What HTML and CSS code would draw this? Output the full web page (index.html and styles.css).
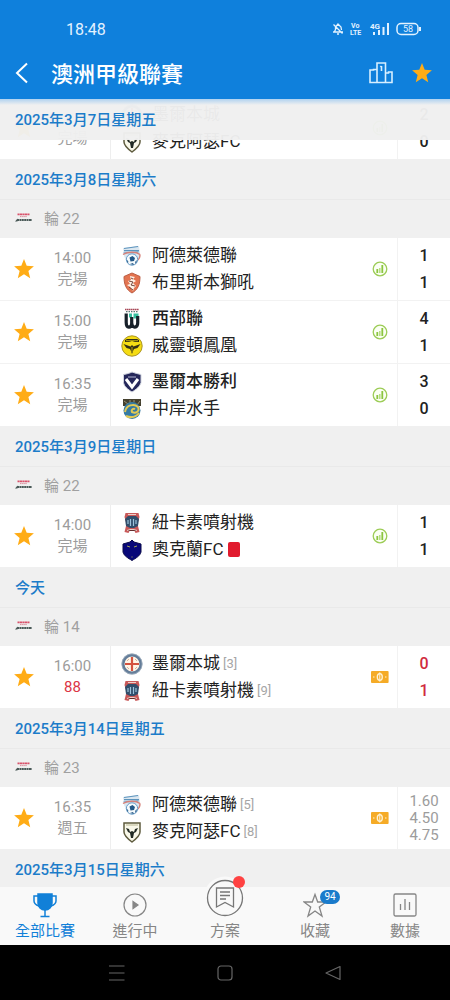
FILE: index.html
```html
<!DOCTYPE html>
<html lang="zh-Hant">
<head>
  <meta charset="UTF-8">
  <meta name="viewport" content="width=device-width, initial-scale=1">
  <title>澳洲甲級聯賽</title>
  <link rel="stylesheet" href="styles.css">
</head>
<body>
  <!-- Shared icons -->
  <svg class="sprite" aria-hidden="true">
    <symbol id="star" viewBox="0 0 22 22">
      <path fill="#ffac16" d="M11 1l2.7 6.8 7.2.5-5.5 4.7 1.8 7.2-6.2-3.9-6.2 3.9 1.8-7.2L1.100 8.300l7.200-.5z"/>
    </symbol>
    <symbol id="stats" viewBox="0 0 16 16">
      <circle cx="8" cy="8" r="6.800" fill="#fbfff4" stroke="#9ccc56" stroke-width="1.300"/>
      <path stroke="#8bc53f" stroke-width="1.800" d="M5.300 8v4M10.300 4v8"/>
      <path stroke="#b5dc80" stroke-width="1.500" d="M7.800 7v5"/>
    </symbol>
    <symbol id="cash" viewBox="0 0 18 12">
      <rect width="17.600" height="12" rx="1" fill="#f5ab27"/>
      <ellipse cx="8.800" cy="6" rx="2.500" ry="3.300" fill="none" stroke="#fff3d6" stroke-width="1.300"/>
      <path stroke="#fff3d6" d="M8.800 1.300v9.400M2 6h1.500M14 6h1.500"/>
    </symbol>
    <symbol id="league" viewBox="0 0 17 10">
      <path stroke="#d9526b" stroke-width="1.800" d="M2.500 1.300h12" stroke-dasharray="2.200 .3"/>
      <path stroke="#d88b99" d="M5 3.600h7" stroke-dasharray="1.500 .6"/>
      <path stroke="#4a5a58" stroke-width="2" d="M2 7h15" stroke-dasharray="2 .4"/>
      <path fill="#4a5a58" d="M0 8.500L2.500 5.500v3z"/>
    </symbol>

    <!-- Team crests -->
    <symbol id="adelaide" viewBox="0 0 22 22">
      <path fill="#dbe7f0" d="M2 3l16-2 1 8-2 7-6 5-5-4-3-6z"/>
      <path fill="none" stroke="#5d94bd" stroke-width="1.200" d="M3 3.500l14-2M3 5.600h15M2.500 8l15-1"/>
      <path fill="none" stroke="#d68078" stroke-width="1.400" d="M2 9.500c5-3 13-3 17 0M19 9.500c0 3-1 5-3 6"/>
      <circle cx="11" cy="14.500" r="5.700" fill="#f5fafc" stroke="#679cc8"/>
      <path fill="#245887" d="M8.500 12.500l3-1.500 2.500 2-1 3-3.500.5zM5.500 14l2 3-1 1zM14 17l2-2-1 4zM9 19l3-1 1 2z"/>
    </symbol>
    <symbol id="brisbane" viewBox="0 0 22 22">
      <path fill="#e37450" stroke="#bd5e43" d="M3 4.500L11 1l8 3.500c0 8-2 13-8 16.500C5 17.500 3 12.500 3 4.500z"/>
      <path fill="#fff3e8" d="M9 4l5 1-2 2 3 2-3 2 3 3-2 2-1 3-3-4-3-2 3-1-2-3 3-1z"/>
      <path fill="none" stroke="#71453b" d="M8 9l4 1-2 3 4 1M10 6l2 1M8 15l4 3"/>
    </symbol>
    <symbol id="western" viewBox="0 0 22 22">
      <path stroke="#a84858" stroke-width="1.500" d="M4 1.500h14" stroke-dasharray="1.600 .4"/>
      <path stroke="#31564f" d="M5 3.700h12" stroke-dasharray="1.500 1"/>
      <path fill="#36bd9e" d="M12.500 5.500h5v5h-5zM8 5.500h3v4H8z"/>
      <path fill="none" stroke="#172029" stroke-width="3.200" d="M5.200 5.500v9c0 6 5 6 5.500 1V9v6c.5 6 6 5 6 0V8"/>
    </symbol>
    <symbol id="wellington" viewBox="0 0 22 22">
      <circle cx="11" cy="11" r="10.200" fill="#f5dc13" stroke="#ab9520"/>
      <path fill="#332f16" d="M4 5l2-1h10l2 1v2h-4l-3-1-3 1H4zM2.500 9l7 2.500L11 10l1.500 1.500 7-2.500-3 4-3.500 1-1 2-1 3-1-3-1-2-3.500-1z"/>
      <path stroke="#f5dc13" stroke-width=".7" d="M5 5.700h12M11 12v5"/>
    </symbol>
    <symbol id="victory" viewBox="0 0 22 22">
      <path fill="#25275a" stroke="#d0d4df" d="M2.500 3.500C6 3 9 2 11 1c3 1 6 2 9 2.500v8c-1 4-5 7-9 9.500-4-2.500-8-5.500-8.500-9.500z"/>
      <path fill="none" stroke="#fff" stroke-width="3" d="M5 8l6 8 6-8"/>
      <path stroke="#b5b8d4" d="M7 6h8"/>
    </symbol>
    <symbol id="mariners" viewBox="0 0 22 22">
      <path fill="#45412f" d="M2 1h18v7H2z"/>
      <path stroke="#b3aa87" stroke-width=".8" d="M3 3l4 3M9 2v3M13 2v2M19 3l-3 4"/>
      <circle cx="11" cy="12.500" r="8.500" fill="#367ba3"/>
      <path fill="none" stroke="#e2c953" stroke-width="2" d="M4 14c1-7 9-9 13-5 2 4-2 7-6 5-1-2 1-4 3-3M5 18c5 2 10 1 13-3"/>
    </symbol>
    <symbol id="newcastle" viewBox="0 0 22 22">
      <path fill="#c85959" d="M4.500 1h13l1 4-2 7 2 8-4 1-1-2h-5l-1 2-4-1 2-8-2-7z"/>
      <path fill="#314e6b" d="M4 7l3-3h8l3 3-1 7-4 2H9l-4-2z"/>
      <path fill="none" stroke="#9cc3db" stroke-width="1.200" d="M7 12V8M9.500 14V7M12.500 14V7M15 12V8"/>
      <path stroke="#efd0c9" d="M7 2.500h8M6 18.500l3-1h4l3 1"/>
    </symbol>
    <symbol id="auckland" viewBox="0 0 22 22">
      <path fill="#080879" stroke="#0a0a4b" d="M2 5l7-2 2-2 2 2 7 2v8c-1 4-5 6-9 8.500C7 19 3 17 2 13z"/>
      <path stroke="#a5a655" d="M6 7l3 1M13 8l3-1M10.500 18h1"/>
    </symbol>
    <symbol id="city" viewBox="0 0 22 22">
      <circle cx="11" cy="11" r="9" fill="#fff5e7" stroke="#647d99" stroke-width="3"/>
      <circle cx="11" cy="11" r="10.200" fill="none" stroke="#b8c4cf" stroke-width=".6"/>
      <path stroke="#d4523f" stroke-width="2.200" d="M11 4v14M4 11h14"/>
      <path fill="none" stroke="#c9a28c" stroke-width=".8" d="M6 8l2-2M14 6l2 2M6 14l2 2M14 16l2-2"/>
    </symbol>
    <symbol id="macarthur" viewBox="0 0 22 22">
      <path fill="#f9f8e9" stroke="#5e5b3e" stroke-width="1.500" d="M3 2h16v9c0 4-4 7-8 10-4-3-8-6-8-10z"/>
      <path stroke="#aaa67f" stroke-width=".8" d="M5 4h12"/>
      <path fill="#202923" d="M5 7l3 1 1 3 2-1 2 1 1-3 3-1-2 4-2 1-1 5h-2l-1-5-2-1z"/>
    </symbol>
  </svg>

  <header class="header">
    <div class="status">
      <span class="clock">18:48</span>
      <svg width="90" height="14" viewBox="0 0 90 14" fill="none" stroke="#e3f2ff">
        <path stroke-width="1.300" d="M1 10h10M2.500 9.500l1-2V5L6 2l3 3 .5 3M5 12h2M1.500 2.500l9 9"/>
        <text class="net-label" x="19" y="6">Vo</text>
        <text class="net-label" x="18" y="13">LTE</text>
        <text class="net-label big" x="38" y="7">4G</text>
        <path stroke-width="2" d="M42 13v-3M47 13V8M51.500 13V5M56 13V1"/>
        <rect x="65" y="1.500" width="21" height="11" rx="4" stroke-width="1.500"/>
        <path stroke-width="2" d="M88 5v4"/>
        <text class="net-label charge" x="71" y="10">58</text>
      </svg>
    </div>
    <div class="title-bar">
      <button class="icon-btn" aria-label="返回">
        <svg width="14" height="22" viewBox="0 0 14 22" fill="none" stroke="#fff" stroke-width="2"><path d="M12 1.500L2 11l10 9.500"/></svg>
      </button>
      <h1>澳洲甲級聯賽</h1>
      <button class="icon-btn" aria-label="排名">
        <svg width="24" height="22" viewBox="0 0 24 22" fill="none" stroke="#d8efff" stroke-width="1.600">
          <path d="M8 20.500V1h8.500v19.500M8 7.500H4.500M4.500 6.700v1.300H1v12.500h22V10h-3.500v1h-3M12.500 4v5M11.300 5l1.200-1"/>
        </svg>
      </button>
      <button class="icon-btn" aria-label="收藏聯賽"><svg width="22" height="22"><use href="#star"/></svg></button>
    </div>
  </header>

  <main class="list">
    <section class="day pinned">
      <h2>2025年3月7日星期五</h2>
      <article class="match">
        <button class="fav" aria-label="收藏"><svg width="22" height="22"><use href="#star"/></svg></button>
        <div class="time"><span>完場</span></div>
        <div class="teams">
          <div class="team"><svg class="crest"><use href="#city"/></svg>墨爾本城</div>
          <div class="team"><svg class="crest"><use href="#macarthur"/></svg>麥克阿瑟FC</div>
        </div>
        <svg class="mark" width="16" height="16"><use href="#stats"/></svg>
        <div class="score"><span>2</span><span>0</span></div>
      </article>
    </section>

    <section class="day">
      <h2>2025年3月8日星期六</h2>
      <h3><svg width="17" height="10"><use href="#league"/></svg>輪 22</h3>
      <article class="match">
        <button class="fav" aria-label="收藏"><svg width="22" height="22"><use href="#star"/></svg></button>
        <div class="time"><span>14:00</span><span>完場</span></div>
        <div class="teams">
          <div class="team"><svg class="crest"><use href="#adelaide"/></svg>阿德萊德聯</div>
          <div class="team"><svg class="crest"><use href="#brisbane"/></svg>布里斯本獅吼</div>
        </div>
        <svg class="mark" width="16" height="16"><use href="#stats"/></svg>
        <div class="score"><span>1</span><span>1</span></div>
      </article>
      <article class="match">
        <button class="fav" aria-label="收藏"><svg width="22" height="22"><use href="#star"/></svg></button>
        <div class="time"><span>15:00</span><span>完場</span></div>
        <div class="teams">
          <div class="team winner"><svg class="crest"><use href="#western"/></svg>西部聯</div>
          <div class="team"><svg class="crest"><use href="#wellington"/></svg>威靈頓鳳凰</div>
        </div>
        <svg class="mark" width="16" height="16"><use href="#stats"/></svg>
        <div class="score"><span>4</span><span>1</span></div>
      </article>
      <article class="match">
        <button class="fav" aria-label="收藏"><svg width="22" height="22"><use href="#star"/></svg></button>
        <div class="time"><span>16:35</span><span>完場</span></div>
        <div class="teams">
          <div class="team winner"><svg class="crest"><use href="#victory"/></svg>墨爾本勝利</div>
          <div class="team"><svg class="crest"><use href="#mariners"/></svg>中岸水手</div>
        </div>
        <svg class="mark" width="16" height="16"><use href="#stats"/></svg>
        <div class="score"><span>3</span><span>0</span></div>
      </article>
    </section>

    <section class="day">
      <h2>2025年3月9日星期日</h2>
      <h3><svg width="17" height="10"><use href="#league"/></svg>輪 22</h3>
      <article class="match">
        <button class="fav" aria-label="收藏"><svg width="22" height="22"><use href="#star"/></svg></button>
        <div class="time"><span>14:00</span><span>完場</span></div>
        <div class="teams">
          <div class="team"><svg class="crest"><use href="#newcastle"/></svg>紐卡素噴射機</div>
          <div class="team"><svg class="crest"><use href="#auckland"/></svg>奧克蘭FC<i class="red-card"></i></div>
        </div>
        <svg class="mark" width="16" height="16"><use href="#stats"/></svg>
        <div class="score"><span>1</span><span>1</span></div>
      </article>
    </section>

    <section class="day">
      <h2>今天</h2>
      <h3><svg width="17" height="10"><use href="#league"/></svg>輪 14</h3>
      <article class="match live">
        <button class="fav" aria-label="收藏"><svg width="22" height="22"><use href="#star"/></svg></button>
        <div class="time"><span>16:00</span><span class="minute">88</span></div>
        <div class="teams">
          <div class="team"><svg class="crest"><use href="#city"/></svg>墨爾本城<small>[3]</small></div>
          <div class="team"><svg class="crest"><use href="#newcastle"/></svg>紐卡素噴射機<small>[9]</small></div>
        </div>
        <svg class="mark" width="18" height="12"><use href="#cash"/></svg>
        <div class="score"><span>0</span><span>1</span></div>
      </article>
    </section>

    <section class="day">
      <h2>2025年3月14日星期五</h2>
      <h3><svg width="17" height="10"><use href="#league"/></svg>輪 23</h3>
      <article class="match">
        <button class="fav" aria-label="收藏"><svg width="22" height="22"><use href="#star"/></svg></button>
        <div class="time"><span>16:35</span><span>週五</span></div>
        <div class="teams">
          <div class="team"><svg class="crest"><use href="#adelaide"/></svg>阿德萊德聯<small>[5]</small></div>
          <div class="team"><svg class="crest"><use href="#macarthur"/></svg>麥克阿瑟FC<small>[8]</small></div>
        </div>
        <svg class="mark" width="18" height="12"><use href="#cash"/></svg>
        <div class="odds"><span>1.60</span><span>4.50</span><span>4.75</span></div>
      </article>
    </section>

    <section class="day">
      <h2>2025年3月15日星期六</h2>
    </section>
  </main>

  <nav class="tabs">
    <a href="#" class="tab active">
      <svg width="24" height="26" viewBox="0 0 24 26" fill="none" stroke="currentColor" stroke-width="1.500">
        <path fill="currentColor" d="M5 2h14v9c0 4-3 7-7 7s-7-3-7-7z"/>
        <path d="M5 4H1v5c0 3 2 4 5 5M19 4h4v5c0 3-2 4-5 5M12 18v6M7.500 24.500h9"/>
      </svg>
      全部比賽
    </a>
    <a href="#" class="tab">
      <svg width="24" height="26" viewBox="0 0 24 26" fill="none" stroke="currentColor" stroke-width="1.200">
        <circle cx="12" cy="13" r="11"/><path fill="currentColor" d="M10 9.500l5 3.500-5 3.500z"/>
      </svg>
      進行中
    </a>
    <a href="#" class="tab raised">
      <svg width="44" height="44" viewBox="0 0 44 44" fill="none" stroke="#777" stroke-width="1.300">
        <circle cx="22" cy="22" r="21.500" fill="#f9f9f9" stroke="none"/>
        <circle cx="22" cy="22" r="17.500"/>
        <path d="M13.500 12h17v19l-8.500-4.500-8.500 4.500zM17 16h10M17 19.500h10M17 23h6"/>
        <circle cx="36" cy="6" r="6" fill="#ff4242" stroke="none"/>
      </svg>
      方案
    </a>
    <a href="#" class="tab">
      <svg width="24" height="26" viewBox="0 0 24 26" fill="none" stroke="currentColor" stroke-width="1.300">
        <path d="M12 2.500l2.700 7.500H23l-6.700 5 2.700 9-7-5-7 5 2.700-9L1 10h8.300z"/>
      </svg>
      <span class="badge">94</span>
      收藏
    </a>
    <a href="#" class="tab">
      <svg width="24" height="26" viewBox="0 0 24 26" fill="none" stroke="currentColor" stroke-width="1.300">
        <rect x="1" y="2" width="22" height="22" rx="1.500"/><path d="M7.500 12v6M12 7v11M16.500 10v8"/>
      </svg>
      數據
    </a>
  </nav>

  <footer class="system-bar">
    <svg width="16" height="16" viewBox="0 0 16 16"><path d="M0 1h15.500M0 8h15.500M0 15h15.500"/></svg>
    <svg width="16" height="16" viewBox="0 0 16 16"><rect x="1" y="1" width="14" height="14" rx="3"/></svg>
    <svg width="16" height="16" viewBox="0 0 16 16"><path d="M15 1.500v13L1 8z" stroke-linejoin="round"/></svg>
  </footer>
</body>
</html>
```

FILE: styles.css
```css
* {
  box-sizing: border-box;
}
body {
  margin: 0;
  height: 100vh;
  display: flex;
  flex-direction: column;
  font-family: Roboto, "Noto Sans CJK TC", sans-serif;
  font-size: 15px;
  background: #f0f0f0;
  color: #222;
}
button {
  padding: 0;
  border: none;
  background: none;
  cursor: pointer;
}
svg {
  display: block;
  flex: none;
}
.sprite {
  position: absolute;
  width: 0;
  height: 0;
}

/* Header */
.header {
  position: relative;
  z-index: 3;
  flex: none;
  background: #0f80dc;
  color: #fff;
}
.header::after {
  content: "";
  position: absolute;
  top: 100%;
  left: 0;
  right: 0;
  height: 6px;
  background: linear-gradient(#b0d2f0, rgba(240, 240, 240, 0));
}
.status {
  display: flex;
  align-items: center;
  justify-content: space-between;
  height: 48px;
  padding: 10px 28px 0 66px;
}
.clock {
  font-size: 16px;
  color: #e3f2ff;
}
.net-label {
  font-size: 7px;
  font-weight: 700;
  fill: #e3f2ff;
  stroke: none;
}
.net-label.big {
  font-size: 8px;
}
.net-label.charge {
  font-size: 9px;
  font-weight: 400;
}
.title-bar {
  display: flex;
  align-items: center;
  gap: 18px;
  height: 51px;
  padding: 0 17px 2px 15px;
}
h1 {
  flex: 1;
  margin: 0 0 0 4px;
  padding-bottom: 2px;
  font-size: 22px;
  font-weight: 500;
}

/* Match list */
.list {
  flex: 1;
  min-height: 0;
  overflow: hidden;
}
h2 {
  margin: 0;
  padding: 0 15px;
  height: 41px;
  line-height: 42px;
  border-bottom: 1px solid #e9e9e9;
  font-size: 15px;
  font-weight: 500;
  color: #1c7cc9;
  background: #f0f0f0;
}
h3 {
  display: flex;
  align-items: center;
  gap: 12px;
  margin: 0;
  padding: 0 15px 3px;
  height: 38px;
  font-size: 15px;
  font-weight: 400;
  color: #a0a0a0;
}
.pinned h2 {
  position: relative;
  z-index: 2;
  border-bottom: none;
  background: rgba(240, 240, 240, 0.97);
}
/* the scrolled row runs under the pinned date */
.pinned .match {
  margin-top: -43px;
}
.pinned .time {
  align-self: end;
  padding-bottom: 10px;
}
.match {
  display: grid;
  grid-template-columns: 35px 75px 1fr 34px 53px;
  align-items: center;
  height: 62px;
  background: #fff;
}
.match + .match {
  height: 63px;
  border-top: 1px solid #f2f2f2;
}
.fav {
  padding-left: 13px;
}
.time, .score, .odds {
  display: flex;
  flex-direction: column;
  text-align: center;
}
.time {
  line-height: 21px;
  color: #9c9c9c;
}
.minute {
  color: #dc3545;
}
.teams {
  align-self: stretch;
  display: flex;
  flex-direction: column;
  justify-content: center;
  padding-left: 10px;
  border-left: 1px solid #eee;
}
.team {
  display: flex;
  align-items: center;
  height: 27px;
  line-height: 25px;
  font-size: 17px;
  white-space: nowrap;
}
.winner {
  font-weight: 500;
}
.crest {
  width: 22px;
  height: 22px;
  margin-right: 9px;
}
.team small {
  margin-left: 3px;
  font-size: 13px;
  color: #a6a6a6;
}
.red-card {
  width: 12px;
  height: 15px;
  margin-left: 5px;
  border-radius: 2px;
  background: #e11b2e;
}
.mark {
  justify-self: center;
}
.score, .odds {
  align-self: stretch;
  justify-content: center;
  border-left: 1px solid #f2f2f2;
}
.score {
  line-height: 27px;
  font-size: 16px;
  font-weight: 500;
}
.live .score {
  color: #d02b3e;
}
.odds {
  line-height: 17px;
  color: #9c9c9c;
}

/* Bottom tabs */
.tabs {
  position: relative;
  z-index: 2;
  flex: none;
  display: grid;
  grid-template-columns: repeat(5, 1fr);
  grid-template-rows: 58px;
  background: #f9f9f9;
}
.tab {
  position: relative;
  display: flex;
  flex-direction: column;
  align-items: center;
  justify-content: flex-end;
  gap: 2px;
  padding-bottom: 3px;
  line-height: 22px;
  color: #868686;
  text-decoration: none;
}
.tab.active {
  color: #1180d8;
}
.raised {
  gap: 0;
}
.badge {
  position: absolute;
  top: 3px;
  left: 50%;
  width: 20px;
  margin-left: 5px;
  border-radius: 7px;
  line-height: 14px;
  font-size: 10px;
  text-align: center;
  color: #fff;
  background: #1a7bcb;
}

.system-bar {
  flex: none;
  display: flex;
  align-items: center;
  justify-content: center;
  gap: 92px;
  height: 55px;
  background: #000;
}
.system-bar svg {
  fill: none;
  stroke: #666;
  stroke-width: 1.2;
}
```
